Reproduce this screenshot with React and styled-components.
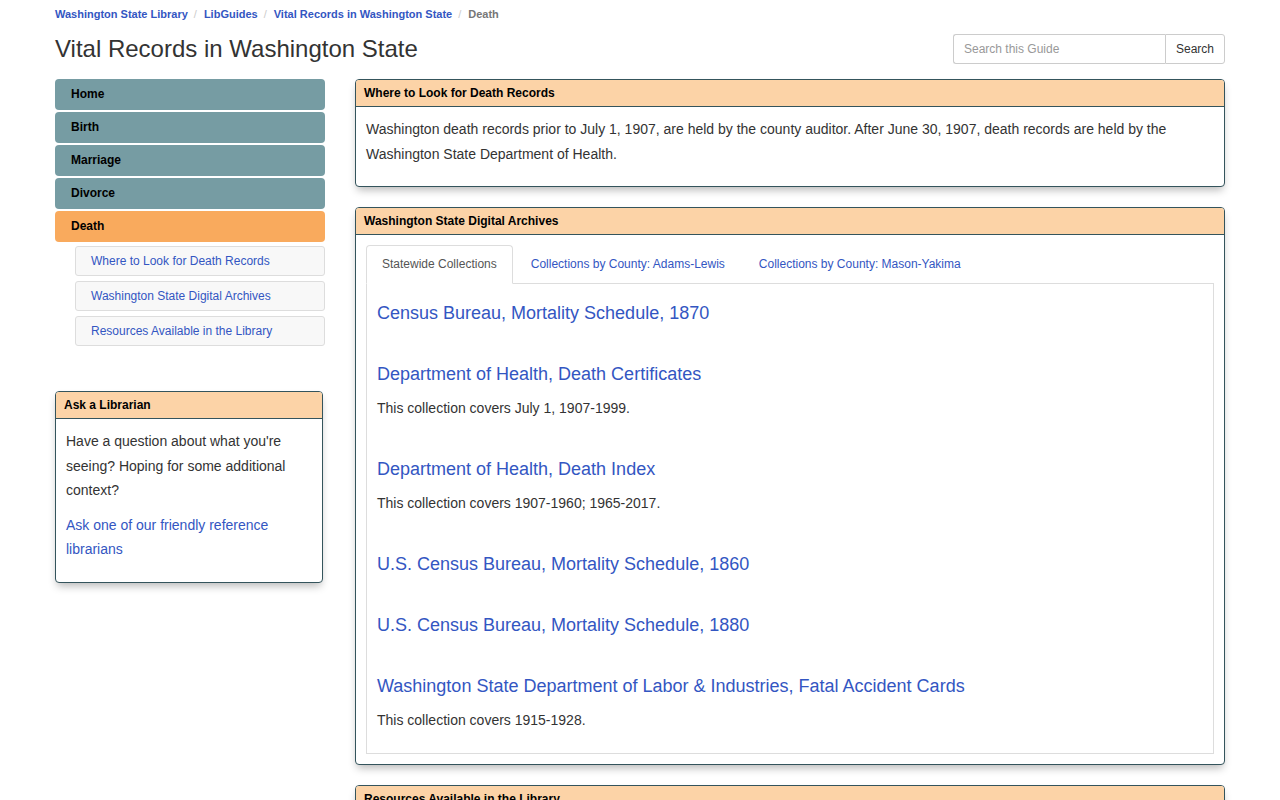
import React from 'react';
import styled, { createGlobalStyle } from 'styled-components';

const GlobalStyle = createGlobalStyle`
  body {
    margin: 0;
    font-family: "Liberation Sans", Arial, sans-serif;
    font-size: 14px;
    color: #333;
    background: #fff;
  }
  * { box-sizing: border-box; }
`;

const LINK = '#3356c2';
const PANEL_BORDER = '#34545c';
const PANEL_HEAD = '#fcd3a7';

const Page = styled.div`
  width: 1170px;
  margin: 0 auto;
`;

const Breadcrumb = styled.ol`
  list-style: none;
  margin: 0;
  padding: 6px 0 0;
  display: flex;
  font-size: 11px;
  font-weight: bold;
  line-height: 16px;
`;

const Crumb = styled.li`
  color: ${(p) => (p.$current ? '#777' : LINK)};
  &:not(:first-child)::before {
    content: '/';
    color: #ccc;
    font-weight: normal;
    padding: 0 7px 0 6px;
  }
`;

const HeaderRow = styled.div`
  display: flex;
  justify-content: space-between;
  align-items: center;
  margin-top: 12px;
  height: 30px;
`;

const Title = styled.h1`
  margin: 0;
  font-size: 24px;
  font-weight: normal;
  line-height: 26px;
  color: #333;
`;

const SearchGroup = styled.form`
  display: flex;
  height: 30px;
`;

const SearchInput = styled.input`
  width: 212px;
  height: 30px;
  padding: 5px 10px;
  font-family: inherit;
  font-size: 12px;
  color: #555;
  border: 1px solid #ccc;
  border-right: none;
  border-radius: 3px 0 0 3px;
  outline: none;
  &::placeholder { color: #999; }
`;

const SearchButton = styled.button`
  width: 60px;
  height: 30px;
  font-family: inherit;
  font-size: 12px;
  color: #333;
  background: #fff;
  border: 1px solid #ccc;
  border-radius: 0 3px 3px 0;
`;

const Columns = styled.div`
  display: grid;
  grid-template-columns: 270px 870px;
  gap: 30px;
  margin-top: 15px;
  align-items: start;
`;

const SideNav = styled.nav`
  display: flex;
  flex-direction: column;
  gap: 2px;
`;

const Pill = styled.div`
  height: 31px;
  padding: 7px 16px;
  font-size: 12px;
  font-weight: bold;
  line-height: 17px;
  color: #000;
  background: ${(p) => (p.$active ? '#f9aa5d' : '#769ca3')};
  border-radius: 4px;
`;

const SubNav = styled.div`
  display: flex;
  flex-direction: column;
  gap: 5px;
  margin: 4px 0 45px 20px;
`;

const SubItem = styled.div`
  height: 30px;
  padding: 6px 15px;
  font-size: 12px;
  line-height: 16px;
  color: ${LINK};
  background: #f8f8f8;
  border: 1px solid #ddd;
  border-radius: 3px;
`;

const Panel = styled.section`
  border: 1px solid ${PANEL_BORDER};
  border-radius: 4px;
  background: #fff;
  box-shadow: 0 5px 8px -2px rgba(0, 0, 0, 0.28);
  margin-bottom: 20px;
  width: ${(p) => p.$width || 'auto'};
  overflow: hidden;
`;

const PanelHead = styled.h2`
  margin: 0;
  padding: 6px 8px;
  font-size: 12px;
  font-weight: bold;
  line-height: 14px;
  color: #000;
  background: ${PANEL_HEAD};
  border-bottom: 1px solid ${PANEL_BORDER};
`;

const PanelBody = styled.div`
  padding: 10px;
`;

const Text = styled.p`
  margin: 0 0 10px;
  font-size: 14px;
  line-height: 24.5px;
  color: #333;
`;

const TextLink = styled.a`
  display: block;
  margin: 0 0 10px;
  font-size: 14px;
  line-height: 24.5px;
  color: ${LINK};
  text-decoration: none;
`;

const Tabs = styled.ul`
  list-style: none;
  margin: 0;
  padding: 0;
  display: flex;
  border-bottom: 1px solid #ddd;
`;

const Tab = styled.li`
  margin: 0 2px -1px 0;
  padding: 10px 15px;
  font-size: 12px;
  line-height: 17px;
  color: ${(p) => (p.$active ? '#555' : LINK)};
  background: ${(p) => (p.$active ? '#fff' : 'transparent')};
  border: 1px solid ${(p) => (p.$active ? '#ddd' : 'transparent')};
  border-bottom-color: ${(p) => (p.$active ? '#fff' : 'transparent')};
  border-radius: 4px 4px 0 0;
`;

const TabContent = styled.div`
  border: 1px solid #ddd;
  border-top: none;
  padding: 19px 10px 23px;
  display: flex;
  flex-direction: column;
  gap: 41px;
`;

const Item = styled.div`
  display: flex;
  flex-direction: column;
  gap: 14px;
`;

const ItemLink = styled.a`
  font-size: 18px;
  line-height: 20px;
  color: ${LINK};
  text-decoration: none;
`;

const ItemDesc = styled.div`
  font-size: 14px;
  line-height: 20px;
  color: #333;
`;

const collections = [
  { title: 'Census Bureau, Mortality Schedule, 1870' },
  { title: 'Department of Health, Death Certificates', desc: 'This collection covers July 1, 1907-1999.' },
  { title: 'Department of Health, Death Index', desc: 'This collection covers 1907-1960; 1965-2017.' },
  { title: 'U.S. Census Bureau, Mortality Schedule, 1860' },
  { title: 'U.S. Census Bureau, Mortality Schedule, 1880' },
  { title: 'Washington State Department of Labor & Industries, Fatal Accident Cards', desc: 'This collection covers 1915-1928.' },
];

export default function App() {
  return (
    <Page>
      <GlobalStyle />
      <Breadcrumb>
        <Crumb>Washington State Library</Crumb>
        <Crumb>LibGuides</Crumb>
        <Crumb>Vital Records in Washington State</Crumb>
        <Crumb $current>Death</Crumb>
      </Breadcrumb>

      <HeaderRow>
        <Title>Vital Records in Washington State</Title>
        <SearchGroup onSubmit={(e) => e.preventDefault()}>
          <SearchInput placeholder="Search this Guide" />
          <SearchButton type="button">Search</SearchButton>
        </SearchGroup>
      </HeaderRow>

      <Columns>
        <div>
          <SideNav>
            <Pill>Home</Pill>
            <Pill>Birth</Pill>
            <Pill>Marriage</Pill>
            <Pill>Divorce</Pill>
            <Pill $active>Death</Pill>
          </SideNav>
          <SubNav>
            <SubItem>Where to Look for Death Records</SubItem>
            <SubItem>Washington State Digital Archives</SubItem>
            <SubItem>Resources Available in the Library</SubItem>
          </SubNav>

          <Panel $width="268px">
            <PanelHead>Ask a Librarian</PanelHead>
            <PanelBody>
              <Text>Have a question about what you're seeing? Hoping for some additional context?</Text>
              <TextLink href="#">Ask one of our friendly reference librarians</TextLink>
            </PanelBody>
          </Panel>
        </div>

        <div>
          <Panel>
            <PanelHead>Where to Look for Death Records</PanelHead>
            <PanelBody>
              <Text>
                Washington death records prior to July 1, 1907, are held by the county auditor. After June 30, 1907, death records are held by the Washington State Department of Health.
              </Text>
            </PanelBody>
          </Panel>

          <Panel>
            <PanelHead>Washington State Digital Archives</PanelHead>
            <PanelBody>
              <Tabs>
                <Tab $active>Statewide Collections</Tab>
                <Tab>Collections by County: Adams-Lewis</Tab>
                <Tab>Collections by County: Mason-Yakima</Tab>
              </Tabs>
              <TabContent>
                {collections.map((c) => (
                  <Item key={c.title}>
                    <ItemLink href="#">{c.title}</ItemLink>
                    {c.desc && <ItemDesc>{c.desc}</ItemDesc>}
                  </Item>
                ))}
              </TabContent>
            </PanelBody>
          </Panel>

          <Panel>
            <PanelHead>Resources Available in the Library</PanelHead>
            <PanelBody>
              <Text>Explore the library's print and microfilm resources.</Text>
            </PanelBody>
          </Panel>
        </div>
      </Columns>
    </Page>
  );
}
